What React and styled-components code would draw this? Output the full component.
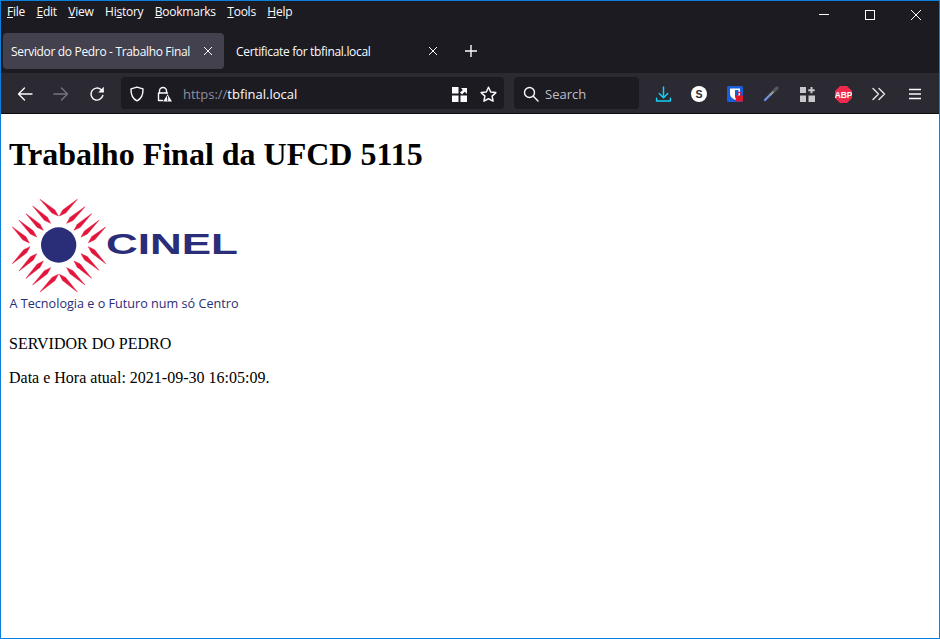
import React from "react"
import styled, { createGlobalStyle } from "styled-components"

const UI_FONT = `"Open Sans", "Noto Sans", sans-serif`
const SERIF = `"Liberation Serif", serif`

const GlobalStyle = createGlobalStyle`
  html, body {
    margin: 0;
    background: #fff;
  }
`

const menuItems = [
  ["", "F", "ile"],
  ["", "E", "dit"],
  ["", "V", "iew"],
  ["Hi", "s", "tory"],
  ["", "B", "ookmarks"],
  ["", "T", "ools"],
  ["", "H", "elp"],
]

// ray ends read off the logo, outer tip first
const rays = [
  [120, 25, 175, 75], [232, 25, 178, 75], [98, 45, 152, 97], [255, 47, 200, 97],
  [78, 68, 130, 118], [275, 68, 222, 118], [57, 88, 110, 138], [297, 88, 243, 138],
  [37, 108, 88, 156], [317, 108, 265, 155], [37, 218, 90, 167], [317, 218, 265, 167],
  [57, 240, 110, 188], [297, 238, 243, 188], [78, 262, 130, 210], [275, 262, 222, 210],
  [98, 282, 152, 230], [255, 282, 200, 230], [120, 303, 175, 250], [232, 303, 178, 250],
]

const rayPoints = ([x1, y1, x2, y2]) => {
  const len = Math.hypot(x2 - x1, y2 - y1)
  const nx = (-(y2 - y1) / len) * 6.5
  const ny = ((x2 - x1) / len) * 6.5
  const mx = x2 - ((x2 - x1) / len) * 20
  const my = y2 - ((y2 - y1) / len) * 20
  return `${x1},${y1} ${mx + nx},${my + ny} ${x2},${y2} ${mx - nx},${my - ny}`
}

const Icon = ({ children, size = 16, color = "#fbfbfe" }) => (
  <svg width={size} height={size} viewBox="0 0 16 16" fill="none" stroke={color} strokeWidth="1.4" strokeLinecap="round" strokeLinejoin="round">
    {children}
  </svg>
)

const CinelLogo = () => (
  <LogoSvg width="232" height="118" viewBox="0 0 232 118">
    <g transform="translate(-9 -3) scale(0.33333)">
      {rays.map((r, i) => (
        <polygon key={i} points={rayPoints(r)} fill="#e2163c" stroke="#e2163c" strokeWidth="1.5" />
      ))}
      <circle cx="176" cy="162" r="53" fill="#2a2d78" />
    </g>
    <text x="97" y="60" fontFamily="Liberation Sans, sans-serif" fontWeight="700" fontSize="29" fill="#2a2d78" textLength="132" lengthAdjust="spacingAndGlyphs">CINEL</text>
    <text x="0.5" y="114" fontFamily="Open Sans, sans-serif" fontSize="12.5" fill="#2a2d78" textLength="229" lengthAdjust="spacingAndGlyphs">A Tecnologia e o Futuro num só Centro</text>
  </LogoSvg>
)

const App = () => {
  return (
    <Window>
      <GlobalStyle />
      <TitleRow>
        <Menu>
          {menuItems.map(([a, key, b]) => (
            <MenuItem key={key + b}>
              {a}
              <AccessKey>{key}</AccessKey>
              {b}
            </MenuItem>
          ))}
        </Menu>
        <WindowControls>
          <WindowButton>
            <svg width="12" height="12" viewBox="0 0 12 12" stroke="#fff" fill="none"><path d="M1 5.5h10" /></svg>
          </WindowButton>
          <WindowButton>
            <svg width="12" height="12" viewBox="0 0 12 12" stroke="#fff" fill="none"><rect x="1.5" y="1.5" width="9" height="9" /></svg>
          </WindowButton>
          <WindowButton>
            <svg width="12" height="12" viewBox="0 0 12 12" stroke="#fff" fill="none"><path d="M1 1l10 10M11 1L1 11" /></svg>
          </WindowButton>
        </WindowControls>
      </TitleRow>

      <TabStrip>
        <Tab $active>
          <TabTitle>Servidor do Pedro - Trabalho Final</TabTitle>
          <TabClose>
            <svg width="10" height="10" viewBox="0 0 10 10" stroke="#fbfbfe" fill="none"><path d="M1 1l8 8M9 1L1 9" /></svg>
          </TabClose>
        </Tab>
        <Tab>
          <TabTitle>Certificate for tbfinal.local</TabTitle>
          <TabClose>
            <svg width="10" height="10" viewBox="0 0 10 10" stroke="#fbfbfe" fill="none"><path d="M1 1l8 8M9 1L1 9" /></svg>
          </TabClose>
        </Tab>
        <NewTab>
          <svg width="14" height="14" viewBox="0 0 14 14" stroke="#fbfbfe" strokeWidth="1.4" fill="none"><path d="M7 1v12M1 7h12" /></svg>
        </NewTab>
      </TabStrip>

      <NavBar>
        <NavButton>
          <Icon><path d="M15 8H1.5M7.5 2L1.5 8l6 6" /></Icon>
        </NavButton>
        <NavButton>
          <Icon color="#76757d"><path d="M1 8h13.5M8.5 2l6 6-6 6" /></Icon>
        </NavButton>
        <NavButton>
          <Icon>
            <path d="M13.8 9.5A6 6 0 1 1 12 3.6L14 5.5" />
            <path d="M14.8 0.8v5.6H9.2" fill="#fbfbfe" stroke="none" />
          </Icon>
        </NavButton>

        <UrlBar>
          <UrlIcon $width={27}>
            <Icon>
              <path d="M8 1.2l6 1.7c.2 5.6-1.5 9.7-6 11.9C3.5 12.6 1.8 8.5 2 2.9z" />
            </Icon>
          </UrlIcon>
          <UrlIcon $width={27}>
            <Icon>
              <path d="M3.5 7V5a3.5 3.5 0 0 1 7 0v2" />
              <path d="M6.5 14.5H2.5V7h9" />
              <path d="M11.6 8.2L16 15.6H7.2z" fill="#fbfbfe" stroke="none" />
              <path d="M11.6 10.5v2.5M11.6 14v.4" stroke="#1c1b22" strokeWidth="1" />
            </Icon>
          </UrlIcon>
          <UrlText>
            <UrlScheme>https://</UrlScheme>tbfinal.local
          </UrlText>
          <UrlIcon $width={28}>
            <svg width="15" height="15" viewBox="0 0 15 15" fill="#fbfbfe">
              <rect x="0" y="0" width="6.5" height="6.5" />
              <rect x="0" y="8.5" width="6.5" height="6.5" />
              <rect x="8.5" y="8.5" width="6.5" height="6.5" />
              <path d="M9 1h6v6l-2.2-2.2L10 7.5 8 5.5l2.8-2.6z" />
            </svg>
          </UrlIcon>
          <UrlIcon $width={24}>
            <Icon size={17}>
              <path d="M8 1.2l2.1 4.4 4.8.6-3.5 3.3.9 4.8L8 12l-4.3 2.3.9-4.8L1.1 6.2l4.8-.6z" />
            </Icon>
          </UrlIcon>
        </UrlBar>

        <SearchBar>
          <Icon>
            <circle cx="6.5" cy="6.5" r="5" />
            <path d="M10.3 10.3L15 15" />
          </Icon>
          <SearchText>Search</SearchText>
        </SearchBar>

        <NavButton>
          <Icon size={17} color="#14d0f4">
            <path d="M8 1v9.5M4 7l4 4 4-4M1.5 11.5v2.7h13v-2.7" />
          </Icon>
        </NavButton>
        <NavButton>
          <svg width="16" height="16" viewBox="0 0 16 16">
            <circle cx="8" cy="8" r="8" fill="#fff" />
            <text x="8" y="11.7" textAnchor="middle" fontFamily="Liberation Sans, sans-serif" fontWeight="700" fontSize="10.5" fill="#2b2a33">S</text>
          </svg>
        </NavButton>
        <NavButton>
          <svg width="16" height="16" viewBox="0 0 16 16">
            <rect width="16" height="16" rx="1.5" fill="#175ddc" />
            <path d="M3 2.5h10v5.5c0 2.8-2.6 4.6-5 6-2.4-1.4-5-3.2-5-6z" fill="#fff" />
            <path d="M8 4h3.5v4c0 1.6-1.7 3-3.5 4z" fill="#175ddc" />
            <path d="M10.6 9.5V8a1.7 1.7 0 0 1 3.4 0v1.5" stroke="#e0162b" strokeWidth="1.2" fill="none" />
            <rect x="8.7" y="9.5" width="7.3" height="6" rx="0.5" fill="#e0162b" />
          </svg>
        </NavButton>
        <NavButton>
          <svg width="16" height="16" viewBox="0 0 16 16" fill="none" strokeLinecap="round">
            <path d="M2 14L7.5 8.5" stroke="#6f8fe0" strokeWidth="2.4" />
            <path d="M7.5 8.5L11 5" stroke="#9a9aa2" strokeWidth="2.4" />
            <path d="M11.5 4.5L14 2" stroke="#55555e" strokeWidth="3.2" />
          </svg>
        </NavButton>
        <NavButton>
          <svg width="15" height="15" viewBox="0 0 15 15" fill="#c8c8cc">
            <rect x="0" y="0" width="6" height="6" />
            <rect x="0" y="8.5" width="6" height="6.5" />
            <rect x="8.5" y="8.5" width="6.5" height="6.5" />
            <path d="M10.5 0h2v2.2h2.2v2h-2.2v2h-2v-2H8.3v-2h2.2z" />
          </svg>
        </NavButton>
        <NavButton>
          <svg width="17" height="17" viewBox="0 0 17 17">
            <path d="M5 0h7l5 5v7l-5 5H5l-5-5V5z" fill="#ee2a4c" />
            <text x="8.5" y="11.5" textAnchor="middle" fontFamily="Liberation Sans, sans-serif" fontWeight="700" fontSize="8.4" fill="#fff">ABP</text>
          </svg>
        </NavButton>
        <NavButton>
          <Icon size={16} color="#e6e6ea">
            <path d="M2 2.5L7.5 8 2 13.5M8 2.5L13.5 8 8 13.5" />
          </Icon>
        </NavButton>
        <NavButton>
          <svg width="14" height="12" viewBox="0 0 14 12" stroke="#fbfbfe" strokeWidth="1.3" fill="none"><path d="M1 1.5h12M1 6h12M1 10.5h12" /></svg>
        </NavButton>
      </NavBar>

      <Page>
        <Heading>Trabalho Final da UFCD 5115</Heading>
        <CinelLogo />
        <Line>SERVIDOR DO PEDRO</Line>
        <Line>Data e Hora atual: 2021-09-30 16:05:09.</Line>
      </Page>
    </Window>
  )
}

const Window = styled.div`
  box-sizing: border-box;
  height: 100vh;
  display: flex;
  flex-direction: column;
  border: 1px solid #0a7fdc;
  background: #fff;
  overflow: hidden;
`
const TitleRow = styled.div`
  height: 30px;
  display: flex;
  justify-content: space-between;
  background: #1c1b22;
`
const Menu = styled.div`
  display: flex;
  gap: 11.5px;
  padding: 3px 0 0 6px;
  font: 12px ${UI_FONT};
  letter-spacing: -0.25px;
  color: #fbfbfe;
`
const MenuItem = styled.span`
  line-height: 16px;
`
const AccessKey = styled.span`
  text-decoration: underline;
`
const WindowControls = styled.div`
  display: flex;
`
const WindowButton = styled.div`
  width: 46px;
  height: 28px;
  display: flex;
  align-items: center;
  justify-content: center;
`
const TabStrip = styled.div`
  height: 42px;
  box-sizing: border-box;
  padding: 2px 0 0 2px;
  display: flex;
  gap: 4px;
  background: #1c1b22;
`
const Tab = styled.div`
  width: 221px;
  height: 36px;
  box-sizing: border-box;
  padding: 0 11px 0 8px;
  display: flex;
  align-items: center;
  justify-content: space-between;
  border-radius: 4px;
  background: ${(p) => (p.$active ? "#42414d" : "transparent")};
`
const TabTitle = styled.span`
  font: 12px ${UI_FONT};
  letter-spacing: -0.33px;
  color: #fbfbfe;
  white-space: nowrap;
`
const TabClose = styled.span`
  display: flex;
`
const NewTab = styled.div`
  width: 36px;
  height: 36px;
  display: flex;
  align-items: center;
  justify-content: center;
`
const NavBar = styled.div`
  height: 41px;
  box-sizing: border-box;
  padding: 0 6px;
  display: flex;
  align-items: center;
  background: #2b2a33;
  border-bottom: 1px solid #0c0c0d;
`
const NavButton = styled.div`
  width: 36px;
  height: 32px;
  flex: none;
  box-sizing: border-box;
  padding-top: 2px;
  display: flex;
  align-items: center;
  justify-content: center;
`
const UrlBar = styled.div`
  width: 383px;
  height: 32px;
  margin: 0 10px 0 6px;
  padding: 2px 0 0 8px;
  box-sizing: border-box;
  display: flex;
  align-items: center;
  border-radius: 4px;
  background: #1c1b22;
`
const UrlIcon = styled.span`
  width: ${(p) => p.$width}px;
  flex: none;
  display: flex;
  align-items: center;
`
const UrlText = styled.span`
  flex: 1;
  font: 13px ${UI_FONT};
  color: #fbfbfe;
`
const UrlScheme = styled.span`
  color: #8f8f9d;
`
const SearchBar = styled.div`
  width: 125px;
  height: 32px;
  margin-right: 6px;
  padding: 2px 0 0 9px;
  box-sizing: border-box;
  display: flex;
  align-items: center;
  gap: 6px;
  border-radius: 4px;
  background: #1c1b22;
`
const SearchText = styled.span`
  font: 13px ${UI_FONT};
  color: #bfbfc9;
`
const Page = styled.main`
  flex: 1;
  padding: 0 8px;
  font: 16px ${SERIF};
  color: #000;
`
const Heading = styled.h1`
  margin: 22.44px 0 20.44px;
  font: bold 32px ${SERIF};
`
const LogoSvg = styled.svg`
  display: block;
  margin-top: 1px;
  margin-bottom: 23px;
`
const Line = styled.p`
  margin: 16px 0;
`

export default App
